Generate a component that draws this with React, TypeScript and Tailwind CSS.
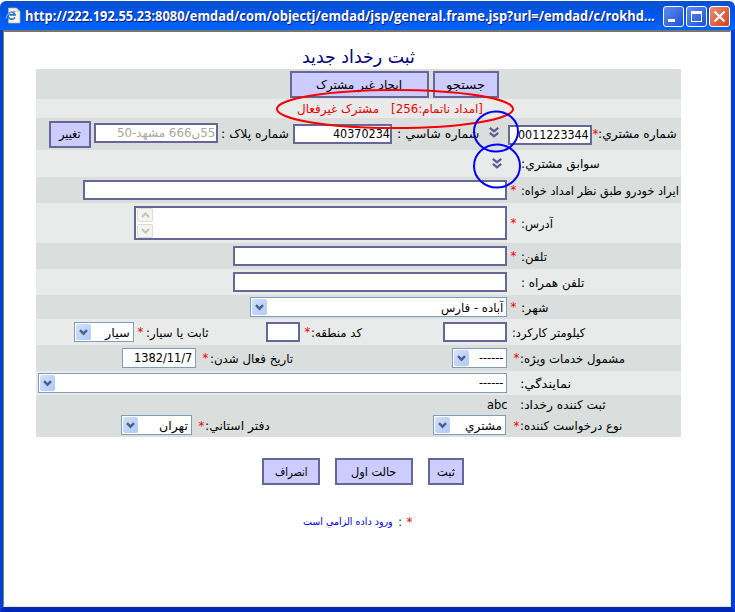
import { useLayoutEffect, useRef, useState, type ReactNode } from "react";

/* A single line of text squeezed or stretched to the given width. */
function Fit({ w, dir = "rtl", className = "", children }: { w: number; dir?: "rtl" | "ltr"; className?: string; children: ReactNode }) {
  const ref = useRef<HTMLSpanElement>(null);
  const [scale, setScale] = useState(1);
  useLayoutEffect(() => {
    if (ref.current && ref.current.offsetWidth) setScale(w / ref.current.offsetWidth);
  }, [w]);
  return (
    <span dir={dir} className={`flex shrink-0 justify-start ${className}`} style={{ width: w }}>
      <span
        ref={ref}
        className={`inline-block shrink-0 whitespace-nowrap ${dir === "rtl" ? "origin-right" : "origin-left"}`}
        style={{ transform: `scaleX(${scale})` }}
      >
        {children}
      </span>
    </span>
  );
}

function Row({ className, children }: { className: string; children?: ReactNode }) {
  return (
    <div dir="rtl" className={`flex w-full shrink-0 items-center ${className}`}>
      {children}
    </div>
  );
}

function Star({ className = "" }: { className?: string }) {
  return <span className={`w-[7px] shrink-0 text-center text-[13px] leading-4 text-[#f00000] ${className}`}>*</span>;
}

function Field({ className = "", children }: { className?: string; children?: ReactNode }) {
  return (
    <div className={`flex h-5 shrink-0 items-center border-2 border-[#666699] bg-white ${className}`}>{children}</div>
  );
}

function Arrow() {
  return (
    <span className="flex h-4 w-[15px] shrink-0 items-center justify-center rounded-[2px] bg-linear-to-br from-[#d3e0fe] to-[#b0c8f8]">
      <svg width="9" height="7" viewBox="0 0 9 7" fill="none">
        <path d="M1 1.200 4.500 4.700 8 1.200" stroke="#4d6185" strokeWidth="2.400" />
      </svg>
    </span>
  );
}

function Select({ className = "", children }: { className?: string; children?: ReactNode }) {
  return (
    <div className={`flex h-5 shrink-0 items-center justify-between border border-[#7f9db9] bg-white pr-[3px] pl-px ${className}`}>
      {children}
      <Arrow />
    </div>
  );
}

function Button({ className = "", children }: { className?: string; children: ReactNode }) {
  return (
    <button className={`flex h-[27px] shrink-0 items-center justify-center border-2 border-[#666699] bg-[#ccccff] ${className}`}>
      {children}
    </button>
  );
}

function Chevrons({ className = "" }: { className?: string }) {
  return (
    <svg className={`shrink-0 ${className}`} width="10" height="11" viewBox="0 0 10 11" fill="none">
      <path d="M.800 .800 5 4.300 9.200 .800M.800 5.800 5 9.300 9.200 5.800" stroke="#5c5c92" strokeWidth="2.200" />
    </svg>
  );
}

function ScrollButton({ up = false }: { up?: boolean }) {
  return (
    <span className="flex h-[14px] w-4 items-center justify-center rounded-[2px] border border-[#dddcd3] bg-[#f5f4ef]">
      <svg width="9" height="6" viewBox="0 0 9 6" fill="none">
        <path d={up ? "M1 5 4.5 1.5 8 5" : "M1 1 4.5 4.5 8 1"} stroke="#c5c4ba" strokeWidth="2.200" />
      </svg>
    </span>
  );
}

function PageIcon() {
  return (
    <svg className="shrink-0" width="16" height="17" viewBox="0 0 16 17" fill="none">
      <path d="M3.500 1h8L15 4.500V16H3.500z" fill="#f6f5ec" stroke="#b8b6a4" strokeWidth=".7" />
      <path d="M11.500 1v3.500H15z" fill="#cfcdbd" />
      <path d="M9.800 10.300A3.500 3.500 0 1 1 10 7.800H4.500" stroke="#2a76c9" strokeWidth="1.700" />
      <path d="M1 11.500C1 8 6 3.500 10.500 4.500" stroke="#73aee5" strokeWidth="1.200" />
    </svg>
  );
}

const captionButton = "flex size-[21px] shrink-0 items-center justify-center rounded-[3px] border border-white bg-linear-to-br";

export default function App() {
  return (
    <div className="relative flex h-[612px] w-[735px] flex-col overflow-hidden bg-white font-['DejaVu_Sans_Condensed','DejaVu_Sans',sans-serif] text-[12px] leading-4 text-black">
      <header className="mt-px flex h-[29px] shrink-0 items-center rounded-t-[6px] bg-linear-to-b from-[#0a50cf] via-[#0054e4] via-35% to-[#0364fb] pr-[5px] pl-[5px]">
        <PageIcon />
        <Fit w={630} dir="ltr" className="ml-[4px] pt-px font-['Open_Sans',sans-serif] text-[13.5px] leading-5 font-bold text-white [text-shadow:1px_1px_0_#0a1883]">
          http://222.192.55.23:8080/emdad/com/objectj/emdad/jsp/general.frame.jsp?url=/emdad/c/rokhd...
        </Fit>
        <div className="ml-auto flex gap-[2px] pt-[2px]">
          <span className={`${captionButton} from-[#5f8df0] to-[#1c4fd8]`}>
            <span className="mt-[8px] mr-[5px] h-[3px] w-[7px] bg-white" />
          </span>
          <span className={`${captionButton} from-[#5f8df0] to-[#1c4fd8]`}>
            <span className="h-[11px] w-[11px] border border-t-[3px] border-white" />
          </span>
          <span className={`${captionButton} from-[#ec8c70] to-[#d23c12]`}>
            <svg width="13" height="13" viewBox="0 0 13 13">
              <path d="M1.500 1.500l10 10M11.500 1.500l-10 10" stroke="white" strokeWidth="2.200" />
            </svg>
          </span>
        </div>
      </header>

      <div className="flex min-h-0 flex-1 flex-col border-r-4 border-b-[5px] border-l-[3px] border-[#0040d8] border-b-[#0028b8]">
        <main className="flex flex-1 flex-col border border-t-2 border-r-[#ece9d8] border-b-[#ece9d8] border-l-[#807e70] border-t-[#77766b]">
          <h1 className="flex h-[37px] items-center pt-[13px] pl-[298px] font-['DejaVu_Sans',sans-serif] text-[18px] text-[#000080]">
            <Fit w={113}>ثبت رخداد جدید</Fit>
          </h1>

          <section className="ml-8 flex w-[645px] flex-col">
            <Row className="h-[30px] bg-[#dadedd] pr-[182px]">
              <Button className="w-[66px] pt-px"><Fit w={39}>جستجو</Fit></Button>
              <Button className="mr-[4px] w-[139px] pt-px"><Fit w={86}>ایجاد غیر مشترک</Fit></Button>
            </Row>
            <Row className="h-[19px] bg-[#e9ebea] pt-px pr-[198px] text-[#f00000]">
              <Fit w={92}>[امداد ناتمام:256]</Fit>
              <Fit w={82} className="mr-[12px]">مشترک غیرفعال</Fit>
            </Row>
            <Row className="h-8 bg-[#dadedd] pr-[4px]">
              <Fit w={79}>شماره مشتري:</Fit>
              <Star className="-mr-px" />
              <Field className="mt-[2px] w-[84px] pr-px"><Fit w={71}>0011223344</Fit></Field>
              <Chevrons className="mr-[9px] -mt-[3px]" />
              <Fit w={82} className="mr-[10px] -mt-px">شماره شاسي :</Fit>
              <Field className="mr-[5px] -mt-px w-[99px]"><Fit w={57}>40370234</Fit></Field>
              <Fit w={68} className="mr-[4px]">شماره پلاک :</Fit>
              <Field className="mr-[3px] -mt-[2px] w-[124px] pr-px text-[#aaa79d]"><Fit w={98}>55ن666 مشهد-50</Fit></Field>
              <Button className="mr-[3px] w-[42px]"><Fit w={22}>تغییر</Fit></Button>
            </Row>
            <Row className="h-[27px] bg-[#e9ebea] pr-[81px]">
              <Fit w={79}>سوابق مشتري:</Fit>
              <Chevrons className="mr-[19px]" />
            </Row>
            <Row className="h-[26px] bg-[#dadedd] pr-[2px]">
              <Fit w={158} className="pt-px">ایراد خودرو طبق نظر امداد خواه:</Fit>
              <Star className="mr-[4px]" />
              <Field className="mr-[3px] w-[424px]" />
            </Row>
            <Row className="h-[40px] bg-[#e9ebea] pr-[128px]">
              <Fit w={32} className="pt-[2px]">آدرس:</Fit>
              <Star className="mr-[4px]" />
              <div className="mr-[3px] flex h-[34px] w-[373px] shrink-0 flex-col items-end justify-between border-2 border-[#666699] bg-white px-px">
                <ScrollButton up />
                <ScrollButton />
              </div>
            </Row>
            <Row className="h-[26px] bg-[#dadedd] pr-[134px]">
              <Fit w={26} className="pt-px">تلفن:</Fit>
              <Star className="mr-[4px]" />
              <Field className="mr-[3px] w-[274px]" />
            </Row>
            <Row className="h-[26px] bg-[#e9ebea] pr-[97px]">
              <Fit w={63} className="pt-px">تلفن همراه :</Fit>
              <Field className="mr-[14px] w-[274px]" />
            </Row>
            <Row className="h-6 bg-[#dadedd] pr-[132px]">
              <Fit w={28} className="pt-px">شهر:</Fit>
              <Star className="mr-[4px]" />
              <Select className="mr-[3px] w-[257px]"><Fit w={62} className="pt-px">آباده - فارس</Fit></Select>
            </Row>
            <Row className="h-[26px] bg-[#e9ebea] pr-[96px]">
              <Fit w={73} className="pt-px">کیلومتر کارکرد:</Fit>
              <Field className="mr-[5px] w-[64px]" />
              <Fit w={51} className="mr-[81px] pt-px">کد منطقه:</Fit>
              <Star />
              <Field className="mr-[4px] w-[34px]" />
              <Fit w={63} className="mr-[58px] pt-px">ثابت یا سیار:</Fit>
              <Star className="mr-px" />
              <Select className="mr-[3px] w-[60px]"><Fit w={25} className="pt-px">سیار</Fit></Select>
            </Row>
            <Row className="h-[26px] bg-[#dadedd] pr-[56px]">
              <Fit w={105} className="pt-px">مشمول خدمات ویژه:</Fit>
              <Star />
              <Select className="mr-[6px] w-[55px]"><Fit w={24}>------</Fit></Select>
              <Fit w={83} className="mr-[159px] pt-px">تاریخ فعال شدن:</Fit>
              <Star className="mr-px" />
              <div className="mr-[6px] flex h-5 w-[74px] shrink-0 items-center border border-[#7f9db9] bg-white pr-[3px]">
                <Fit w={58}><bdi dir="ltr">1382/11/7</bdi></Fit>
              </div>
            </Row>
            <Row className="h-6 bg-[#e9ebea] pr-[110px]">
              <Fit w={51} className="pt-px">نمایندگي:</Fit>
              <Select className="mr-[13px] w-[469px]"><Fit w={24}>------</Fit></Select>
            </Row>
            <Row className="h-[19px] bg-[#dadedd] pr-[75px]">
              <Fit w={86} className="pt-px">ثبت کننده رخداد:</Fit>
              <Fit w={20} className="mr-[13px]">abc</Fit>
            </Row>
            <Row className="h-[23px] bg-[#dadedd] pr-[59px]">
              <Fit w={102}>نوع درخواست کننده:</Fit>
              <Star />
              <Select className="mr-[7px] -mt-px w-[73px]"><Fit w={37} className="pt-px">مشتري</Fit></Select>
              <Fit w={65} className="mr-[163px]">دفتر استاني:</Fit>
              <Star />
              <Select className="mr-[6px] -mt-px w-[71px]"><Fit w={29} className="pt-px">تهران</Fit></Select>
            </Row>
          </section>

          <div dir="rtl" className="mt-[21px] flex h-[27px] gap-[15px] pr-[266px]">
            <Button className="w-[36px]"><Fit w={18}>ثبت</Fit></Button>
            <Button className="w-[78px]"><Fit w={45}>حالت اول</Fit></Button>
            <Button className="w-[58px]"><Fit w={33}>انصراف</Fit></Button>
          </div>

          <p dir="rtl" className="mt-[28px] flex items-center pr-[317px]">
            <Star />
            <span className="mr-[4px] w-[4px]">:</span>
            <Fit w={90} className="mr-[5px] pt-px text-[10px] text-[#0000f0]">ورود داده الزامي است</Fit>
          </p>
        </main>
      </div>

      {/* Hand-drawn markers laid over the form */}
      <svg className="pointer-events-none absolute inset-0" width="735" height="612" fill="none" strokeWidth="2">
        <ellipse cx="395" cy="109" rx="118" ry="19" stroke="#f80000" />
        <ellipse cx="496" cy="131.500" rx="22" ry="20" stroke="#0000f8" />
        <ellipse cx="497" cy="166" rx="23" ry="21.500" stroke="#0000f8" />
      </svg>
    </div>
  );
}
